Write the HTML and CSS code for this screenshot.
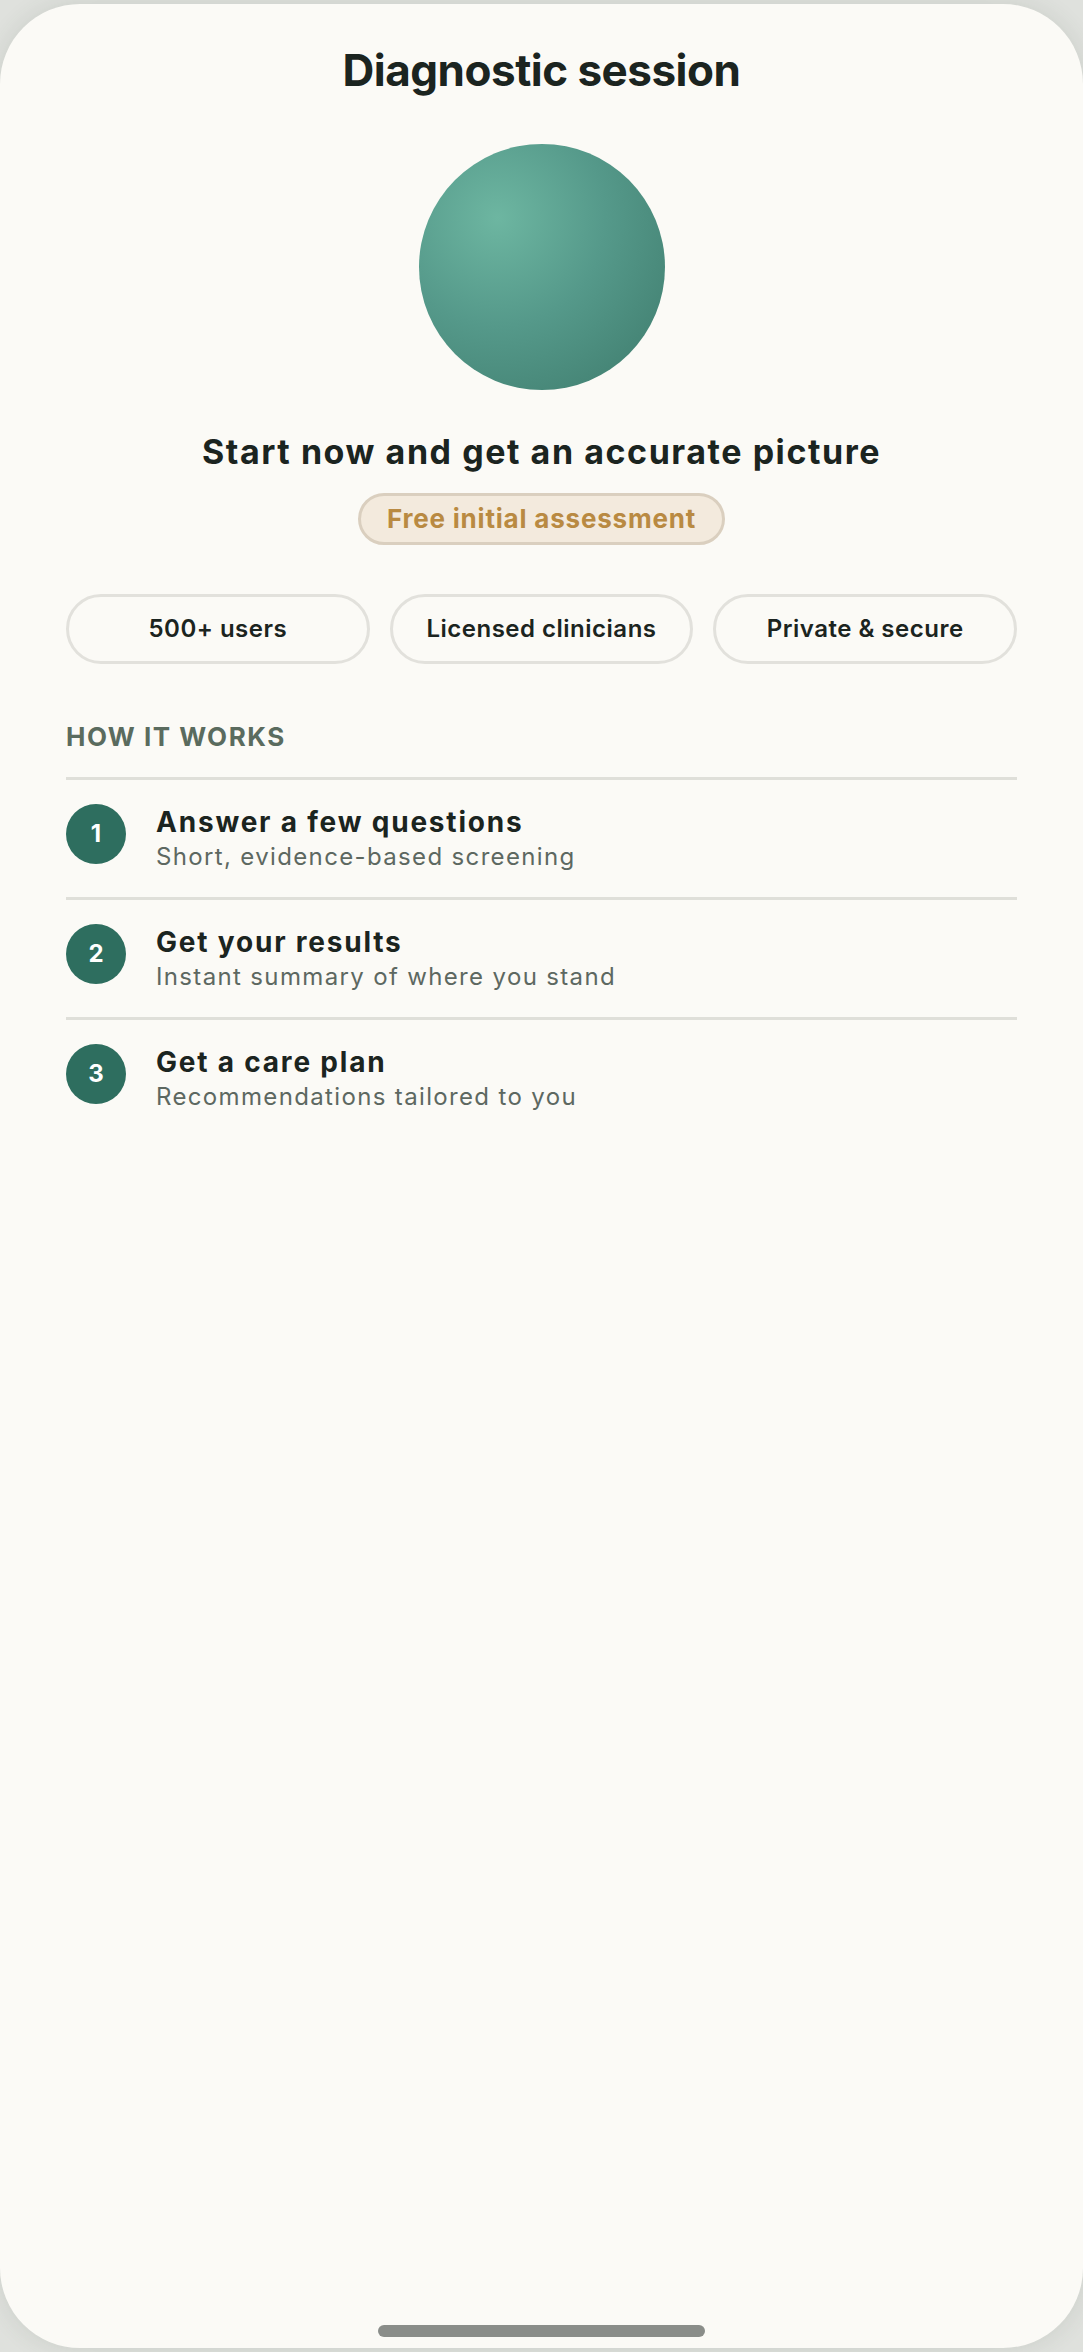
FILE: index.html
```html
<!DOCTYPE html>
<html lang="en">
<head>
  <meta charset="UTF-8">
  <meta name="viewport" content="width=device-width, initial-scale=1.0">
  <title>Diagnostic session</title>
  <link rel="stylesheet" href="styles.css">
</head>
<body>
  <div class="phone">
    <h1 class="title">Diagnostic session</h1>
    <div class="orb"></div>
    <h2 class="headline">Start now and get an accurate picture</h2>
    <div class="badge-wrap">
      <span class="badge">Free initial assessment</span>
    </div>
    <div class="stats">
      <div class="stat">500+ users</div>
      <div class="stat">Licensed clinicians</div>
      <div class="stat">Private &amp; secure</div>
    </div>
    <div class="section-label">HOW IT WORKS</div>
    <div class="steps">
      <div class="step">
        <div class="step-num">1</div>
        <div class="step-text">
          <div class="step-title">Answer a few questions</div>
          <div class="step-sub">Short, evidence-based screening</div>
        </div>
      </div>
      <div class="step">
        <div class="step-num">2</div>
        <div class="step-text">
          <div class="step-title">Get your results</div>
          <div class="step-sub">Instant summary of where you stand</div>
        </div>
      </div>
      <div class="step">
        <div class="step-num">3</div>
        <div class="step-text">
          <div class="step-title">Get a care plan</div>
          <div class="step-sub">Recommendations tailored to you</div>
        </div>
      </div>
    </div>
    <div class="home-bar"></div>
  </div>
</body>
</html>
```

FILE: styles.css
```css
html, body {
  margin: 0;
  padding: 0;
}
body {
  background-color: #dfe1dd;
  font-family: Inter, "Noto Sans", sans-serif;
  color: #1b2420;
}
.phone {
  margin: 4px 0;
  height: 2344px;
  box-sizing: border-box;
  padding: 40px 66px 0;
  background-color: #fbfaf6;
  border-radius: 80px;
  box-shadow: 0 0 24px rgba(60, 70, 60, 0.12);
  display: flex;
  flex-direction: column;
}
.title {
  margin: 0;
  font-size: 44px;
  line-height: 52px;
  font-weight: 700;
  letter-spacing: -0.5px;
  text-align: center;
}
.orb {
  width: 246px;
  height: 246px;
  margin: 48px auto 0;
  border-radius: 50%;
  background: radial-gradient(circle at 32% 30%, #6db6a1 0%, #55998a 45%, #3d7a6b 100%);
}
.headline {
  margin: 41px 0 0;
  font-size: 34px;
  line-height: 42px;
  font-weight: 700;
  letter-spacing: 1.55px;
  text-align: center;
}
.badge-wrap {
  margin-top: 20px;
  text-align: center;
}
.badge {
  display: inline-block;
  padding: 0 26px;
  font-size: 26px;
  line-height: 46px;
  font-weight: 700;
  letter-spacing: 0.8px;
  color: #b98a42;
  background-color: #f3eadd;
  border: 3px solid #dacfbf;
  border-radius: 30px;
}
.stats {
  margin-top: 49px;
  display: grid;
  grid-template-columns: 1fr 1fr 1fr;
  gap: 20px;
}
.stat {
  height: 70px;
  box-sizing: border-box;
  border: 3px solid #e2e1dc;
  border-radius: 35px;
  font-size: 24px;
  line-height: 64px;
  font-weight: 600;
  text-align: center;
  letter-spacing: 0.5px;
}
.section-label {
  margin-top: 57px;
  font-size: 26px;
  line-height: 32px;
  font-weight: 700;
  letter-spacing: 1.5px;
  color: #5a6b5e;
}
.steps {
  margin-top: 24px;
}
.step {
  display: flex;
  align-items: flex-start;
  gap: 30px;
  padding: 24px 0;
  border-top: 3px solid #dfdfd9;
}
.step-num {
  flex: none;
  width: 60px;
  height: 60px;
  border-radius: 50%;
  background-color: #2e6e5f;
  color: #fff;
  font-size: 24px;
  line-height: 60px;
  font-weight: 700;
  text-align: center;
}
.step-title {
  font-size: 28px;
  line-height: 36px;
  font-weight: 700;
  letter-spacing: 1.8px;
}
.step-sub {
  font-size: 24px;
  line-height: 33px;
  color: #5d6861;
  letter-spacing: 1.35px;
}
.home-bar {
  margin: auto auto 11px;
  width: 327px;
  height: 12px;
  border-radius: 6px;
  background-color: #8a8d89;
}
```
